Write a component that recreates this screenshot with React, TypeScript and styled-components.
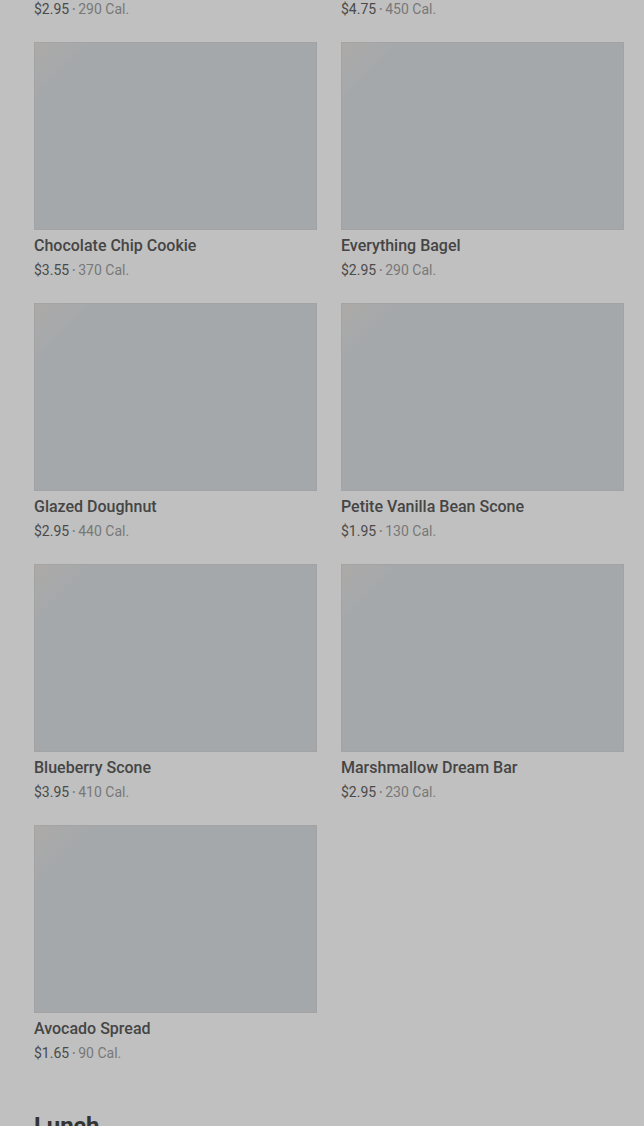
import React from 'react'
import styled, { createGlobalStyle } from 'styled-components'

const Global = createGlobalStyle`
  html, body { margin: 0; padding: 0; background: #c0c0c0; }
  body { font-family: Roboto, "Liberation Sans", sans-serif; overflow: hidden; }
`

const Page = styled.div`
  width: 644px;
  height: 1126px;
  overflow: hidden;
  background: #c0c0c0;
`

const Section = styled.section`
  padding: 0 20px 0 34px;
`

const Grid = styled.div`
  display: grid;
  grid-template-columns: 283px 283px;
  column-gap: 24px;
  row-gap: 23px;
  margin-top: -219px;
`

const Card = styled.div`
  display: flex;
  flex-direction: column;
`

const Thumb = styled.div`
  height: 188px;
  background:
    linear-gradient(135deg, rgba(178, 172, 166, 0.6) 0%, rgba(178, 172, 166, 0) 13%),
    #a5a8ab;
  box-shadow: inset 0 0 0 1px rgba(160, 160, 160, 0.6);
`

const Name = styled.div`
  margin-top: 6px;
  height: 20px;
  font-size: 16px;
  line-height: 20px;
  font-weight: 500;
  color: #454545;
`

const Meta = styled.div`
  margin-top: 4px;
  height: 20px;
  font-size: 14px;
  line-height: 20px;
  color: #787878;
  white-space: nowrap;
`

const Price = styled.span`
  color: #4a4a4a;
`

const Dot = styled.span`
  display: inline-block;
  margin: 0 3px;
  font-size: 9px;
  line-height: 20px;
  vertical-align: top;
`

const Heading = styled.h2`
  margin: 47px 0 0;
  font-size: 24px;
  line-height: 32px;
  font-weight: 700;
  color: #333;
`

const items = [
  { name: 'Butter Croissant', price: '$2.95', cal: '290 Cal.' },
  { name: 'Breakfast Sandwich', price: '$4.75', cal: '450 Cal.' },
  { name: 'Chocolate Chip Cookie', price: '$3.55', cal: '370 Cal.' },
  { name: 'Everything Bagel', price: '$2.95', cal: '290 Cal.' },
  { name: 'Glazed Doughnut', price: '$2.95', cal: '440 Cal.' },
  { name: 'Petite Vanilla Bean Scone', price: '$1.95', cal: '130 Cal.' },
  { name: 'Blueberry Scone', price: '$3.95', cal: '410 Cal.' },
  { name: 'Marshmallow Dream Bar', price: '$2.95', cal: '230 Cal.' },
  { name: 'Avocado Spread', price: '$1.65', cal: '90 Cal.' },
]

export default function App() {
  return (
    <Page>
      <Global />
      <Section>
        <Grid>
          {items.map((it) => (
            <Card key={it.name}>
              <Thumb />
              <Name>{it.name}</Name>
              <Meta>
                <Price>{it.price}</Price>
                <Dot>•</Dot>
                {it.cal}
              </Meta>
            </Card>
          ))}
        </Grid>
        <Heading>Lunch</Heading>
      </Section>
    </Page>
  )
}
